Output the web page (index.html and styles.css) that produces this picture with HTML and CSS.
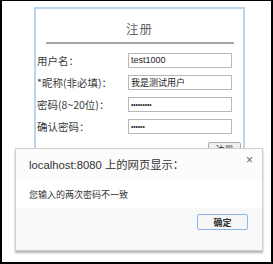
FILE: index.html
```
<!doctype html>
<html lang="zh-CN">
<head>
	<meta charset="UTF-8">
	<title>注册</title>
	<link rel="stylesheet" href="styles.css">
</head>
<body>
	<div class="frame">
		<div class="reg_box">
			<h3>注册</h3>
			<div class="line"></div>
			<div class="row"><span class="lab">用户名：</span><input class="nor" type="text" value="test1000"></div>
			<div class="row"><span class="lab">*昵称(非必填)：</span><input class="nor" type="text" value="我是测试用户"></div>
			<div class="row"><span class="lab">密码(8~20位)：</span><input class="nor pwd" type="password" value="123456789"></div>
			<div class="row"><span class="lab">确认密码：</span><input class="nor pwd" type="password" value="123456"></div>
			<div class="btn_row"><button class="reg_btn">注册</button></div>
		</div>

		<div class="dialog">
			<div class="d_head">localhost:8080 上的网页显示：<span class="close">×</span></div>
			<div class="d_msg">您输入的两次密码不一致</div>
			<div class="d_foot"><button class="ok">确定</button></div>
		</div>
	</div>
</body>
</html>
```

FILE: styles.css
```
	body{margin: 0;
	     background-color: white;
	     font-family: "Liberation Sans", "Noto Sans CJK SC", sans-serif;}
	.frame{width: 273px;
	       height: 264px;
	       box-sizing: border-box;
	       border: 2px solid #000;
	       border-top-width: 1px;
	       position: relative;
	       overflow: hidden;
	       }
	.reg_box
			{width: 211px;
			 margin: 6px 0 0 32px;
			 box-sizing: border-box;
			 border: 2px solid #bcd4ee;
			 border-bottom: 0;
			 height: 160px;
			}

	h3{margin: 12px 0 0;
	   height: 16px;
	   line-height: 16px;
	   text-align: center;
	   font-size: 12.5px;
	   font-weight: normal;
	   color: #666;
	   letter-spacing: 1px;
	   font-family: "Noto Sans CJK SC", sans-serif;}
	.line{margin: 5px 9px 0 10px;
	      height: 2px;
	      background-color: #a5a5a5;}

	.row{display: flex;
	     align-items: center;
	     height: 22px;}
	.line + .row{margin-top: 5px;}
	.lab{width: 92px;
	     padding-left: 1px;
	     box-sizing: border-box;
	     font-size: 10.5px;
	     color: #3a3a3a;
	     font-family: "Noto Sans CJK SC", sans-serif;
	     white-space: nowrap;}
	.nor{width: 104px;
	     height: 15px;
	     box-sizing: border-box;
	     border: 1px solid #b8b8b8;
	     padding: 0 0 0 2px;
	     margin: 0;
	     font-size: 9px;
	     color: #222;
	     font-family: "Liberation Sans", "Noto Sans CJK SC", sans-serif;
	     outline: none;}
	.pwd{font-size: 6.5px;
	     letter-spacing: 0;}

	.btn_row{display: flex;
	         justify-content: flex-end;
	         padding-right: 2px;
	         margin-top: 5px;}
	.reg_btn{width: 33px;
	         height: 15px;
	         padding: 0;
	         border: 1px solid #adadad;
	         border-radius: 2px;
	         background-color: #efefef;
	         font-size: 9px;
	         color: #333;
	         font-family: "Noto Sans CJK SC", sans-serif;}

	.dialog{position: absolute;
	        left: 13px;
	        top: 147px;
	        width: 248px;
	        height: 103px;
	        box-sizing: border-box;
	        border: 1px solid #d0d0d0;
	        background-color: white;
	        box-shadow: 0 2px 2px rgba(0,0,0,0.3);
	        display: flex;
	        flex-direction: column;}
	.d_head{height: 32px;
	        line-height: 32px;
	        padding-left: 13px;
	        font-size: 11.3px;
	        color: #333;
	        background-color: #fcfcfc;
	        position: relative;}
	.close{position: absolute;
	       right: 9px;
	       top: -5px;
	       font-size: 12px;
	       color: #666;}
	.d_msg{height: 27px;
	       line-height: 27px;
	       padding-left: 13px;
	       font-size: 9px;
	       color: #333;
	       font-family: "Noto Sans CJK SC", sans-serif;}
	.d_foot{flex: 1;
	        background-color: #f9f9f9;
	        display: flex;
	        justify-content: flex-end;
	        align-items: flex-start;
	        padding: 6px 14px 0 0;}
	.ok{width: 51px;
	    height: 16px;
	    padding: 0;
	    border: 1px solid #8fb3ee;
	    border-radius: 2px;
	    background-color: #f6f6f6;
	    font-size: 9px;
	    font-weight: bold;
	    color: #333;
	    font-family: "Noto Sans CJK SC", sans-serif;}
```
